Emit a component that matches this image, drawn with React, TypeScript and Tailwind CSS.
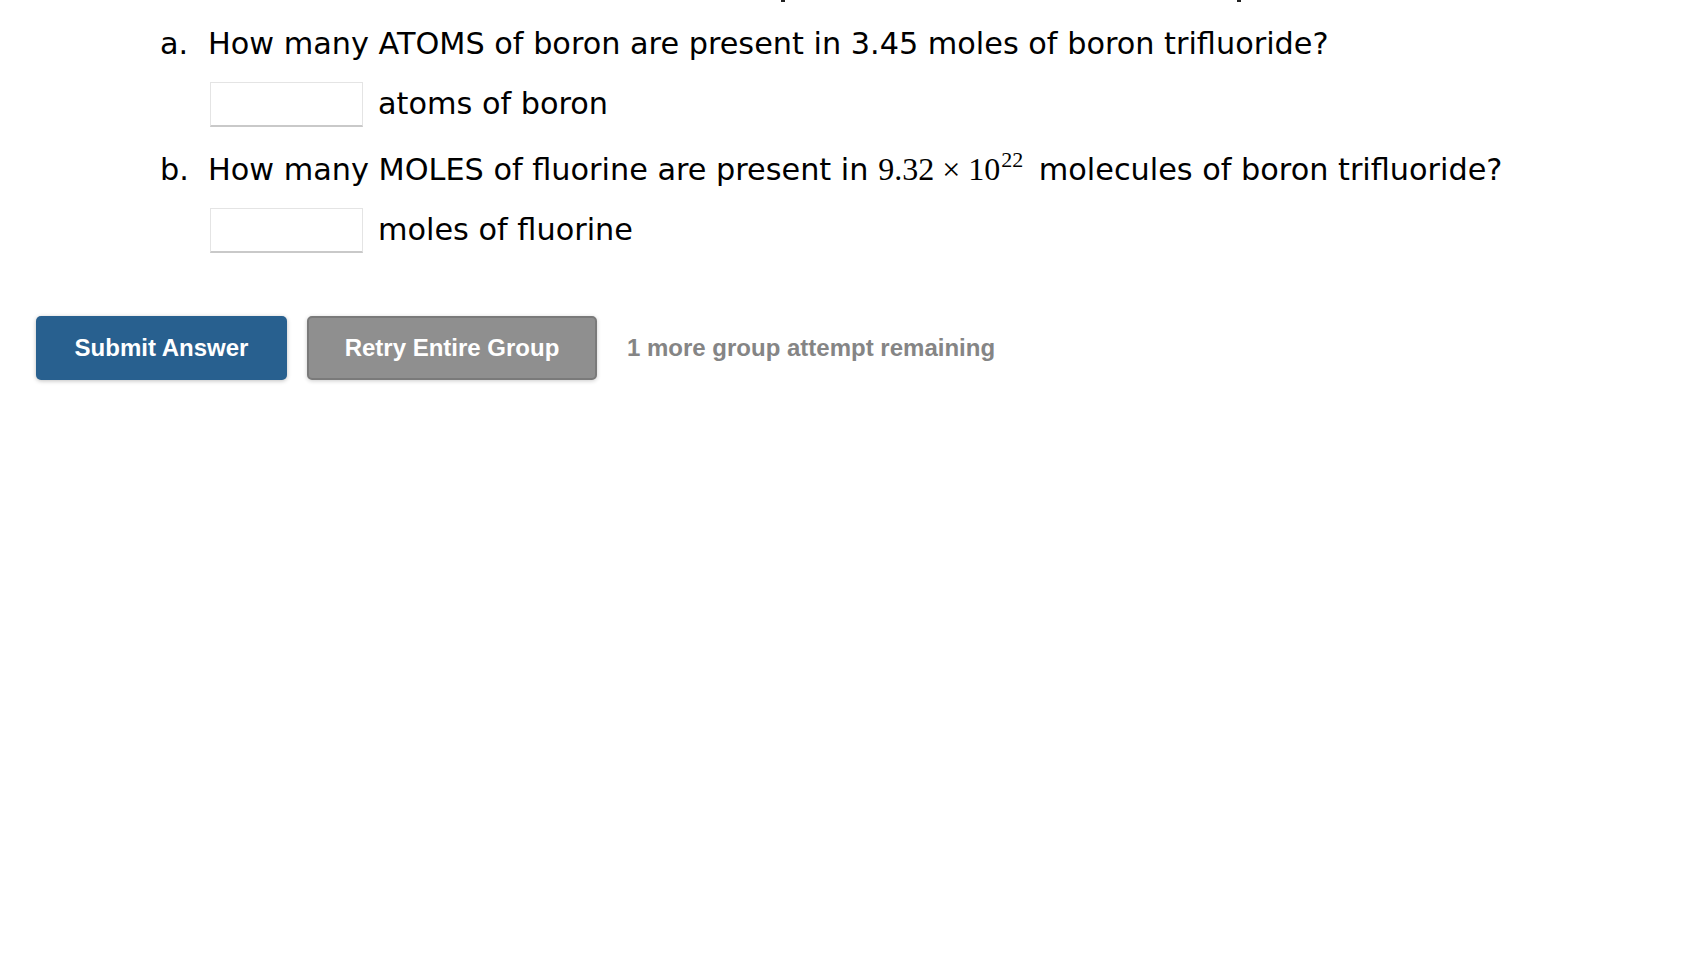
import React from 'react';

const sans = "font-['DejaVu_Sans',Verdana,sans-serif]";
const btnFont = "font-['Liberation_Sans',Arial,Helvetica,sans-serif]";
const mathFont = "font-['Liberation_Serif','Times_New_Roman',serif]";

function AnswerInput({ label }: { label: string }) {
  return (
    <div className="flex items-center gap-[15px] pl-[50px] mt-[18px]">
      <input
        type="text"
        className="w-[153px] h-[45px] bg-white border border-[#e4e4e4] border-b-2 border-b-[#c9c9c9] outline-none px-2"
      />
      <span className="text-[30.3px] leading-[40px] -mt-[2px] text-black">{label}</span>
    </div>
  );
}

function Question({ marker, children }: { marker: string; children: React.ReactNode }) {
  return (
    <div className="flex h-[40px] text-[30.3px] leading-[40px] text-black">
      <span className="w-[48px] shrink-0">{marker}</span>
      <span>{children}</span>
    </div>
  );
}

export default function App() {
  return (
    <div className={`min-h-screen bg-white ${sans}`}>
      {/* descenders of the line cut off above */}
      <div className="flex h-[3px]">
        <span className="ml-[781px] w-[4px] h-[2px] bg-[#222]" />
        <span className="ml-[452px] w-[4px] h-[2px] bg-[#222]" />
      </div>

      <div className="pl-[160px] pt-[21px]">
        <Question marker="a.">
          How many ATOMS of boron are present in 3.45 moles of boron trifluoride?
        </Question>
        <AnswerInput label="atoms of boron" />

        <div className="mt-[23px]">
          <Question marker="b.">
            How many MOLES of fluorine are present in{' '}
            <span className={`${mathFont} text-[32px] leading-none mr-[6px]`}>
              9.32<span className="mx-[8px]">×</span>10
              <sup className="text-[22px] leading-none relative top-[-0.6em] ml-[1px]">22</sup>
            </span>{' '}
            molecules of boron trifluoride?
          </Question>
          <AnswerInput label="moles of fluorine" />
        </div>
      </div>

      <div className={`flex items-center pl-[36px] mt-[63px] ${btnFont}`}>
        <button className="w-[251px] h-[64px] rounded-[5px] bg-[#28608f] text-white font-bold text-[24px] shadow-[0_1px_4px_rgba(0,0,0,0.25)]">
          Submit Answer
        </button>
        <button className="ml-[20px] w-[290px] h-[64px] rounded-[5px] bg-[#8f8f8f] border-2 border-[#7a7a7a] text-white font-bold text-[24px] shadow-[0_1px_4px_rgba(0,0,0,0.2)]">
          Retry Entire Group
        </button>
        <span className="ml-[30px] text-[24px] font-bold text-[#858585]">
          1 more group attempt remaining
        </span>
      </div>
    </div>
  );
}
